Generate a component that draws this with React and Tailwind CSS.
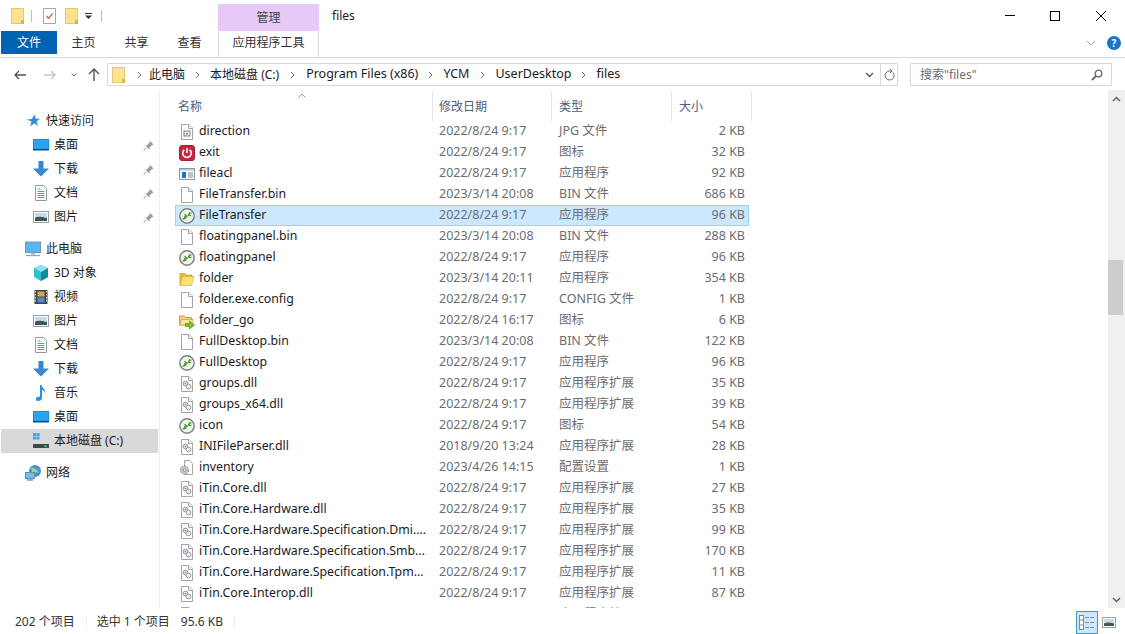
const FONT = "font-['Noto_Sans','Noto_Sans_CJK_SC',sans-serif]";

const files = [
  ["direction", "2022/8/24 9:17", "JPG 文件", "2 KB", "jpg"],
  ["exit", "2022/8/24 9:17", "图标", "32 KB", "exit"],
  ["fileacl", "2022/8/24 9:17", "应用程序", "92 KB", "win"],
  ["FileTransfer.bin", "2023/3/14 20:08", "BIN 文件", "686 KB", "blank"],
  ["FileTransfer", "2022/8/24 9:17", "应用程序", "96 KB", "app", true],
  ["floatingpanel.bin", "2023/3/14 20:08", "BIN 文件", "288 KB", "blank"],
  ["floatingpanel", "2022/8/24 9:17", "应用程序", "96 KB", "app"],
  ["folder", "2023/3/14 20:11", "应用程序", "354 KB", "folder"],
  ["folder.exe.config", "2022/8/24 9:17", "CONFIG 文件", "1 KB", "blank"],
  ["folder_go", "2022/8/24 16:17", "图标", "6 KB", "foldergo"],
  ["FullDesktop.bin", "2023/3/14 20:08", "BIN 文件", "122 KB", "blank"],
  ["FullDesktop", "2022/8/24 9:17", "应用程序", "96 KB", "app"],
  ["groups.dll", "2022/8/24 9:17", "应用程序扩展", "35 KB", "dll"],
  ["groups_x64.dll", "2022/8/24 9:17", "应用程序扩展", "39 KB", "dll"],
  ["icon", "2022/8/24 9:17", "图标", "54 KB", "app"],
  ["INIFileParser.dll", "2018/9/20 13:24", "应用程序扩展", "28 KB", "dll"],
  ["inventory", "2023/4/26 14:15", "配置设置", "1 KB", "ini"],
  ["iTin.Core.dll", "2022/8/24 9:17", "应用程序扩展", "27 KB", "dll"],
  ["iTin.Core.Hardware.dll", "2022/8/24 9:17", "应用程序扩展", "35 KB", "dll"],
  ["iTin.Core.Hardware.Specification.Dmi....", "2022/8/24 9:17", "应用程序扩展", "99 KB", "dll"],
  ["iTin.Core.Hardware.Specification.Smb...", "2022/8/24 9:17", "应用程序扩展", "170 KB", "dll"],
  ["iTin.Core.Hardware.Specification.Tpm...", "2022/8/24 9:17", "应用程序扩展", "11 KB", "dll"],
  ["iTin.Core.Interop.dll", "2022/8/24 9:17", "应用程序扩展", "87 KB", "dll"],
  ["JM.T.dll", "2019/4/20 9:02", "应用程序扩展", "6 KB", "dll"],
];

const Sv = ({ w = 16, h = 16, children, className = "" }) => (
  <svg width={w} height={h} viewBox={`0 0 ${w} ${h}`} className={`shrink-0 ${className}`} fill="none">{children}</svg>
);

const Page = ({ children }) => (
  <Sv>
    <path d="M2.5.5h7.5l3.500 3.500v11.500h-11z" fill="#fff" stroke="#a5a5a5" />
    <path d="M9.500.5v4h4" stroke="#a5a5a5" fill="#f2f2f2" />
    {children}
  </Sv>
);

function FileIcon({ t }) {
  if (t === "blank") return <Page />;
  if (t === "jpg")
    return (
      <Page>
        <rect x="5" y="7" width="6" height="5" fill="#e8eef2" stroke="#6f8494" />
        <rect x="7" y="9" width="2" height="1.500" fill="#6f8494" />
      </Page>
    );
  if (t === "dll")
    return (
      <Page>
        <circle cx="6.500" cy="7.500" r="2.400" stroke="#8f9aa6" fill="#dfe4e8" />
        <circle cx="9.500" cy="10.500" r="2.400" stroke="#8f9aa6" fill="#eef1f3" />
        <circle cx="6.500" cy="7.500" r=".8" fill="#7a8793" />
      </Page>
    );
  if (t === "ini")
    return (
      <Sv>
        <path d="M5.500.5h5l3 3v11h-8z" fill="#fff" stroke="#a5a5a5" />
        <circle cx="5.500" cy="10" r="4" fill="#c9c9c9" stroke="#8a8a8a" strokeDasharray="2 1" />
        <circle cx="5.500" cy="10" r="1.400" fill="#fff" stroke="#8a8a8a" />
      </Sv>
    );
  if (t === "exit")
    return (
      <Sv>
        <rect x=".5" y=".5" width="15" height="15" rx="2.500" fill="#c5283d" stroke="#a51f33" />
        <path d="M5.300 4.800a4.300 4.300 0 1 0 5.400 0" stroke="#fff" strokeWidth="1.600" />
        <path d="M8 3v5" stroke="#fff" strokeWidth="1.600" />
      </Sv>
    );
  if (t === "win")
    return (
      <Sv>
        <rect x=".5" y="2.500" width="15" height="11" fill="#fff" stroke="#8d9aa6" />
        <rect x="1" y="3" width="14" height="1.500" fill="#b9c8d6" />
        <rect x="3" y="6" width="4" height="6" fill="#1b74d0" />
        <path d="M9 7h5M9 9h5M9 11h5" stroke="#7c8894" />
      </Sv>
    );
  if (t === "app")
    return (
      <Sv>
        <circle cx="8" cy="8" r="7.200" fill="#f2f4ee" stroke="#77827a" strokeWidth="1.400" />
        <path d="M3.500 10.800c2.200.2 3.600-.8 4.100-2.800M5.400 6.300l2.500 1.700-2.900 1.200" stroke="#4d9a35" strokeWidth="1.400" />
        <path d="M12.600 5c-1.500-.1-2.500.5-3 1.900M10.800 4.300l-1.500 2.900 2.900.4" stroke="#4d9a35" strokeWidth="1.200" />
      </Sv>
    );
  if (t === "folder")
    return (
      <Sv>
        <path d="M1 2.500h5l1 1.500h6v2H3L1 14z" fill="#e8bb48" stroke="#c89a2c" strokeWidth=".7" />
        <path d="M3.500 5.500H15l-2.500 9H1z" fill="#ffdf78" stroke="#d9ac3a" strokeWidth=".7" />
      </Sv>
    );
  if (t === "foldergo")
    return (
      <Sv>
        <path d="M.5 3h5l1 1.500h6V12H.5z" fill="#f3d27a" stroke="#c9a040" />
        <path d="M2.500 6.500h12l-2 5.500H.5z" fill="#fbe6a3" stroke="#c9a040" strokeWidth=".7" />
        <path d="M6.500 10.500h4V8l5 4-5 4v-2.500h-4z" fill="#7ec422" stroke="#4f8f14" strokeWidth=".7" />
      </Sv>
    );
  return null;
}

function NavIcon({ t }) {
  switch (t) {
    case "star":
      return (
        <Sv>
          <path d="M9.500 1.500l1.300 4.200H15l-3.400 2.700 1.300 4.600-3.600-2.800-4 3 1.200-4.600L1.500 6.500l5.300-.4z" fill="#2f8fd8" />
        </Sv>
      );
    case "desktop":
      return (
        <Sv>
          <rect x="0" y="2" width="16" height="11" rx=".5" fill="#0f8fe8" />
          <rect x="1" y="3" width="14" height="8.500" fill="#2aa5f5" />
          <rect x="0" y="12" width="16" height="1.500" fill="#0b4f86" />
        </Sv>
      );
    case "down":
      return (
        <Sv>
          <path d="M5.500 0h5v7.500H16L8 15.500 0 7.500h5.500z" fill="#3a87cf" />
        </Sv>
      );
    case "doc":
      return (
        <Sv>
          <path d="M2.500 .5h8l3 3v12h-11z" fill="#fff" stroke="#9a9a9a" />
          <path d="M4.500 4h3M4.500 6.500h7M4.500 8.500h7M4.500 10.500h7M4.500 12.500h7" stroke="#4aa3d8" />
        </Sv>
      );
    case "pic":
      return (
        <Sv>
          <rect x=".5" y="2.500" width="15" height="11" fill="#fff" stroke="#9aa0a5" />
          <rect x="2" y="4" width="12" height="8" fill="#c9dbe8" />
          <path d="M2 9c3-2 6-1 12 0v3H2z" fill="#3c5a52" />
        </Sv>
      );
    case "pc":
      return (
        <Sv>
          <rect x=".5" y="1" width="15" height="10.500" fill="#55b6f3" stroke="#7b97ab" />
          <path d="M6 12h4v1.500H6z" fill="#9ab3c4" />
          <path d="M1 14.500h14" stroke="#8fa6b6" strokeWidth="1.300" />
        </Sv>
      );
    case "3d":
      return (
        <Sv>
          <path d="M8 0l7 3v9l-7 4-7-4V3z" fill="#2fc1cf" />
          <path d="M8 7l7-4v9l-7 4z" fill="#108a9e" />
          <path d="M8 0l7 3-7 4-7-4z" fill="#8ce4ea" />
        </Sv>
      );
    case "video":
      return (
        <Sv>
          <rect x="1.500" y="1" width="13" height="14" fill="#3c4750" />
          <rect x="4.500" y="2.500" width="7" height="5" fill="#d8a93e" />
          <rect x="4.500" y="8.500" width="7" height="5" fill="#4f8ec4" />
          <path d="M2.500 2v12M13.500 2v12" stroke="#dfe3e6" strokeDasharray="1.500 1.500" />
        </Sv>
      );
    case "music":
      return (
        <Sv>
          <path d="M7 0h1.500c.4 3 4.500 4 3.500 8-.5-2-2-3-3-3.300V13c0 2-2 3-4 3-1.500 0-2.500-1-2-2.300C3.400 12 5.300 11.500 7 12z" fill="#2b8fe0" />
        </Sv>
      );
    case "drive":
      return (
        <Sv>
          <rect x="0" y="0" width="3" height="3" fill="#39a7e8" />
          <rect x="3.500" y="0" width="3" height="3" fill="#39a7e8" />
          <rect x="0" y="3.500" width="3" height="3" fill="#39a7e8" />
          <rect x="3.500" y="3.500" width="3" height="3" fill="#39a7e8" />
          <rect x="0" y="11" width="16" height="4" rx=".5" fill="#3c4750" />
          <rect x="11" y="12.500" width="3" height="1.300" fill="#58d04a" />
        </Sv>
      );
    case "net":
      return (
        <Sv>
          <circle cx="10" cy="6" r="6" fill="#3e93d4" />
          <path d="M6 3c3-1 6 1 8 5-3-1-5 0-7-1z" fill="#9fd18c" />
          <rect x=".5" y="7.500" width="9" height="6" fill="#6fc0f0" stroke="#6b8ca3" />
          <path d="M2 15h6" stroke="#6b8ca3" strokeWidth="1.300" />
        </Sv>
      );
    default:
      return null;
  }
}

const Pin = () => (
  <Sv w={11} h={11} className="ml-auto">
    <path d="M6.500 .5l4 4-1.500.5-2.500 2.500-.3 2-4-4 2-.3L6.700 2.200z" fill="#9a9a9a" />
    <path d="M3 8l-2.500 2.500" stroke="#9a9a9a" />
  </Sv>
);

const NavRow = ({ icon, label, level = 2, pin }) => (
  <div className={`flex h-6 items-center ${level === 1 ? "pl-[25px]" : "pl-[33px]"} pr-[5px]`}>
    <NavIcon t={icon} />
    <span className="ml-[5px] text-[12px] text-[#1a1a1a]">{label}</span>
    {pin && <Pin />}
  </div>
);

const Crumb = ({ w = "w-[25px]" }) => (
  <span className={`flex ${w} shrink-0 justify-center`}>
    <svg width="5" height="8" viewBox="0 0 5 8" fill="none"><path d="M1 1l3 3-3 3" stroke="#707070" /></svg>
  </span>
);

const FolderSmall = () => (
  <svg width="13" height="16" viewBox="0 0 13 16" className="shrink-0">
    <rect x=".5" y=".5" width="12" height="15" fill="#ffe28f" stroke="#e6c873" />
    <rect x="10" y="12" width="3" height="4" fill="#d9b44a" />
  </svg>
);

const Col = ({ w, pad, children }) => (
  <div className={`flex h-full ${w} ${pad} shrink-0 items-center border-r border-[#e5e5e5] text-[12px] text-[#4c607a]`}>{children}</div>
);

export default function App() {
  return (
    <div className={`flex h-[634px] w-[1125px] flex-col overflow-hidden bg-white ${FONT}`}>
      {/* title bar */}
      <div className="flex h-[31px] shrink-0 items-center">
        <div className="ml-[11px] flex items-center">
          <FolderSmall />
          <span className="ml-[7px] h-[12px] w-px bg-[#bdbdbd]" />
          <svg width="13" height="16" viewBox="0 0 13 16" className="ml-[11px]">
            <path d="M.5.5h12v15H.5z" fill="#fff" stroke="#a5a5a5" />
            <path d="M3.500 8l2 2.500L9.500 5.500" stroke="#e0603a" strokeWidth="1.300" fill="none" />
          </svg>
          <span className="ml-[9px]"><FolderSmall /></span>
          <svg width="7" height="6" viewBox="0 0 7 6" className="ml-[7px]">
            <path d="M0 .5h7" stroke="#333" />
            <path d="M0 2.500h7L3.500 6z" fill="#333" />
          </svg>
          <span className="ml-[9px] h-[12px] w-px bg-[#bdbdbd]" />
        </div>
        <div className="ml-[116px] flex h-[27px] w-[101px] items-center justify-center self-end bg-[#e6c9f7] text-[12px] text-[#444]">管理</div>
        <div className="ml-[13px] text-[12px] text-[#1a1a1a]">files</div>
        <div className="ml-auto flex items-center pr-[19px]">
          <span className="h-px w-[10px] bg-black" />
          <span className="ml-[35px] h-[10px] w-[10px] border border-black" />
          <svg width="10" height="10" viewBox="0 0 10 10" className="ml-[36px]"><path d="M0 0l10 10M10 0L0 10" stroke="#000" /></svg>
        </div>
      </div>
      {/* ribbon tabs */}
      <div className="flex h-[27px] shrink-0 items-start border-b border-[#dadada]">
        <div className="ml-px flex h-[23px] w-[56px] items-center justify-center bg-[#0063b1] text-[12px] text-white">文件</div>
        {["主页", "共享", "查看"].map((t) => (
          <div key={t} className="flex h-[23px] w-[53px] items-center justify-center text-[12px] text-[#333]">{t}</div>
        ))}
        <div className="ml-[2px] flex h-[26px] w-[101px] items-center justify-center border-x border-[#dadada] pb-[3px] text-[12px] text-[#333]">应用程序工具</div>
        <div className="ml-auto flex h-[23px] items-center pr-[4px]">
          <svg width="10" height="6" viewBox="0 0 10 6"><path d="M1 1l4 4 4-4" stroke="#a9a9a9" fill="none" /></svg>
          <span className="ml-[11px] flex h-[14px] w-[14px] items-center justify-center rounded-full bg-[#1a74c9] text-[10px] font-bold leading-none text-white">?</span>
        </div>
      </div>
      {/* address row */}
      <div className="flex h-[32px] shrink-0 items-center pt-px">
        <svg width="12" height="10" viewBox="0 0 12 10" className="ml-[14px]"><path d="M5 1L1 5l4 4M1 5h11" stroke="#555" strokeWidth="1.300" fill="none" /></svg>
        <svg width="12" height="10" viewBox="0 0 12 10" className="ml-[18px]"><path d="M7 1l4 4-4 4M11 5H0" stroke="#c4c4c4" strokeWidth="1.300" fill="none" /></svg>
        <svg width="6" height="4" viewBox="0 0 6 4" className="ml-[15px]"><path d="M.5.5L3 3 5.500.5" stroke="#777" fill="none" /></svg>
        <svg width="12" height="13" viewBox="0 0 12 13" className="ml-[11px]"><path d="M1 6l5-5 5 5M6 1v12" stroke="#555" strokeWidth="1.400" fill="none" /></svg>
        <div className="ml-[7px] flex h-[23px] w-[791px] items-center border border-[#d9d9d9] pl-[4px] text-[12.5px] text-[#1a1a1a]">
          <FolderSmall />
          <span className="ml-[5px] flex w-[19px] justify-center">
            <svg width="5" height="8" viewBox="0 0 5 8" fill="none"><path d="M1 1l3 3-3 3" stroke="#707070" /></svg>
          </span>
          <span className="text-[12px]">此电脑</span>
          <Crumb />
          <span className="text-[12px]">本地磁盘 (C:)</span>
          <Crumb w="w-[27px]" />
          <span>Program Files (x86)</span>
          <Crumb />
          <span>YCM</span>
          <Crumb w="w-[26px]" />
          <span>UserDesktop</span>
          <Crumb />
          <span>files</span>
          <span className="ml-auto flex h-full items-center">
            <svg width="9" height="6" viewBox="0 0 9 6"><path d="M1 1l3.500 3.500L8 1" stroke="#555" strokeWidth="1.300" fill="none" /></svg>
            <span className="ml-[6px] h-full w-px bg-[#d9d9d9]" />
            <svg width="11" height="12" viewBox="0 0 11 12" className="ml-[3px] mr-[2px]"><path d="M9 3.500A4.500 4.500 0 1 1 5.500 2H8M6 0l2.200 2L6 4" stroke="#666" fill="none" /></svg>
          </span>
        </div>
        <div className="ml-[12px] flex h-[23px] w-[202px] items-center border border-[#d9d9d9] pl-[9px] pr-[8px] text-[12px] text-[#6d6d6d]">
          <span>搜索"files"</span>
          <svg width="12" height="12" viewBox="0 0 12 12" className="ml-auto"><circle cx="7.500" cy="4.500" r="3.300" stroke="#666" strokeWidth="1.300" fill="none" /><path d="M5 7l-4 4" stroke="#666" strokeWidth="1.800" /></svg>
        </div>
      </div>
      {/* main */}
      <div className="flex min-h-0 flex-1">
        <nav className="flex h-full w-[160px] shrink-0 flex-col border-r border-[#efefef] pt-[19px]">
          <NavRow icon="star" label="快速访问" level={1} />
          <NavRow icon="desktop" label="桌面" pin />
          <NavRow icon="down" label="下载" pin />
          <NavRow icon="doc" label="文档" pin />
          <NavRow icon="pic" label="图片" pin />
          <div className="h-2" />
          <NavRow icon="pc" label="此电脑" level={1} />
          <NavRow icon="3d" label="3D 对象" />
          <NavRow icon="video" label="视频" />
          <NavRow icon="pic" label="图片" />
          <NavRow icon="doc" label="文档" />
          <NavRow icon="down" label="下载" />
          <NavRow icon="music" label="音乐" />
          <NavRow icon="desktop" label="桌面" />
          <div className="ml-px mr-px bg-[#d9d9d9]">
            <div className="-ml-px"><NavRow icon="drive" label="本地磁盘 (C:)" /></div>
          </div>
          <div className="h-2" />
          <NavRow icon="net" label="网络" level={1} />
        </nav>
        <div className="relative min-w-0 flex-1 overflow-hidden">
          <svg width="8" height="5" viewBox="0 0 8 5" className="absolute left-[138px] top-[3px]"><path d="M.5 4.500L4 1l3.500 3.500" stroke="#9a9a9a" fill="none" /></svg>
          <div className="ml-[13px] flex h-[31px] items-center pt-[2px]">
            <Col w="w-[260px]" pad="pl-[5px]">名称</Col>
            <Col w="w-[119px]" pad="pl-[6px]">修改日期</Col>
            <Col w="w-[120px]" pad="pl-[7px]">类型</Col>
            <Col w="w-[80px]" pad="pl-[7px]">大小</Col>
          </div>
          <div className="ml-[15px] w-[574px]">
            {files.map(([name, date, type, size, icon, sel]) => (
              <div key={name} className={`flex h-[21px] items-center text-[12.3px] ${sel ? "border border-[#99d1ff] bg-[#cce8ff]" : "border border-transparent"}`}>
                <span className="ml-[3px] flex w-[16px] shrink-0 justify-center"><FileIcon t={icon} /></span>
                <span className="ml-[4px] w-[240px] shrink-0 truncate text-[#1a1a1a]">{name}</span>
                <span className="w-[120px] shrink-0 text-[12.5px] text-[#6d6d6d]">{date}</span>
                <span className="w-[120px] shrink-0 text-[12.5px] text-[#6d6d6d]">{type}</span>
                <span className="ml-auto pr-[3px] text-[12.5px] text-[#6d6d6d]">{size}</span>
              </div>
            ))}
          </div>
        </div>
        <div className="flex h-full w-[17px] shrink-0 flex-col bg-[#f0f0f0]">
          <div className="flex h-[17px] items-center justify-center">
            <svg width="9" height="6" viewBox="0 0 9 6"><path d="M1 5l3.500-3.500L8 5" stroke="#606060" strokeWidth="1.500" fill="none" /></svg>
          </div>
          <div className="h-[153px]" />
          <div className="h-[55px] w-[15px] bg-[#cdcdcd]" />
          <div className="flex-1" />
          <div className="flex h-[17px] items-center justify-center">
            <svg width="9" height="6" viewBox="0 0 9 6"><path d="M1 1l3.500 3.500L8 1" stroke="#606060" strokeWidth="1.500" fill="none" /></svg>
          </div>
        </div>
      </div>
      {/* status */}
      <div className="flex h-[26px] shrink-0 items-center pl-[15px] pt-[2px] text-[12px] text-[#333]">
        <span>202 个项目</span>
        <span className="ml-[11px] h-[14px] w-px bg-[#eeeeee]" />
        <span className="ml-[10px]">选中 1 个项目</span>
        <span className="ml-[11px]">95.6 KB</span>
        <span className="ml-[11px] h-[14px] w-px bg-[#eeeeee]" />
        <div className="ml-auto flex items-center pr-[9px]">
          <span className="flex h-[23px] w-[22px] items-center justify-center border border-[#3d9bc9] bg-[#cce8ff]">
            <svg width="16" height="15" viewBox="0 0 16 15" fill="none">
              <rect x=".5" y=".5" width="4" height="14" fill="#fff" stroke="#8a8a8a" />
              <path d="M1 5h3M1 10h3" stroke="#8a8a8a" />
              <path d="M6 2.500h9M6 7.500h9M6 12.500h9" stroke="#8a8a8a" strokeDasharray="4 1" />
            </svg>
          </span>
          <span className="ml-[4px]">
            <svg width="14" height="11" viewBox="0 0 14 11">
              <rect x=".5" y=".5" width="13" height="10" fill="#fff" stroke="#a0a0a0" />
              <rect x="2" y="2" width="10" height="7" fill="#c9dbe8" />
              <path d="M2 6.500c3-1.500 6-1 10 0V9H2z" fill="#3c5a52" />
            </svg>
          </span>
        </div>
      </div>
    </div>
  );
}
